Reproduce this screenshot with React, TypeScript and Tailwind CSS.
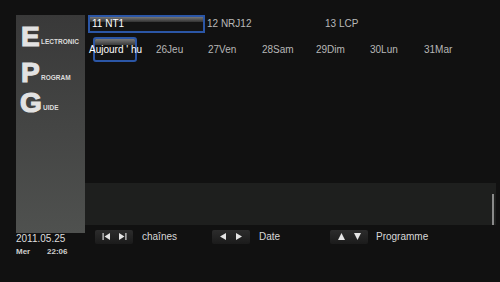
import React from 'react'

const channels = ['11 NT1', '12 NRJ12', '13 LCP']
const days = ['26Jeu', '27Ven', '28Sam', '29Dim', '30Lun', '31Mar']

function Letter({ big, rest, wide }: { big: string; rest: string; wide?: boolean }) {
  return (
    <div className="flex items-end h-[19px] leading-none">
      <span
        className={`text-[28px] font-bold text-[#e2e2e2] [-webkit-text-stroke:1.2px_#e2e2e2] ${
          wide ? 'w-[27px] pl-[4px]' : 'w-[25px] pl-[5px]'
        } leading-[20px] h-[19px] overflow-visible`}
      >
        {big}
      </span>
      <span className="text-[6.5px] font-bold text-[#dcdcdc] leading-none mb-[1px]">{rest}</span>
    </div>
  )
}

function KeyBox({ children }: { children: React.ReactNode }) {
  return (
    <div className="flex items-center justify-center gap-[7px] w-[38px] h-[14px] rounded-[2px] bg-gradient-to-b from-[#2c2c2c] to-[#1b1b1b]">
      {children}
    </div>
  )
}

function Tri({ dir }: { dir: 'l' | 'r' | 'u' | 'd' }) {
  const pts = {
    l: '7,1 7,8 1,4.5',
    r: '1,1 1,8 7,4.5',
    u: '1,8 8,8 4.5,1',
    d: '1,1 8,1 4.5,8',
  }[dir]
  return (
    <svg width="9" height="9" viewBox="0 0 9 9">
      <polygon points={pts} fill="#e4e4e4" />
    </svg>
  )
}

function Skip({ dir }: { dir: 'l' | 'r' }) {
  return (
    <svg width="9" height="9" viewBox="0 0 9 9">
      {dir === 'l' ? (
        <>
          <rect x="0.5" y="1" width="1.2" height="7" fill="#d8d8d8" />
          <polygon points="8,1 8,8 2.5,4.5" fill="#e4e4e4" />
        </>
      ) : (
        <>
          <polygon points="1,1 1,8 6.5,4.5" fill="#e4e4e4" />
          <rect x="7.3" y="1" width="1.2" height="7" fill="#d8d8d8" />
        </>
      )}
    </svg>
  )
}

export default function App() {
  return (
    <div
      className="w-[500px] h-[282px] bg-[#111111] flex overflow-hidden"
      style={{ fontFamily: '"Liberation Sans", Arial, sans-serif' }}
    >
      {/* left column */}
      <div className="w-[85px] pl-4 pt-[15px] flex flex-col shrink-0">
        <div className="w-[69px] h-[218px] bg-gradient-to-b from-[#393939] to-[#4f514f] pt-[12px] flex flex-col gap-[17px]">
          <Letter big="E" rest="LECTRONIC" />
          <Letter big="P" rest="ROGRAM" />
          <div className="mt-[-6px]">
            <Letter big="G" rest="UIDE" wide />
          </div>
        </div>
        <div className="text-[10px] text-[#dedede] leading-none mt-[1px]">2011.05.25</div>
        <div className="flex text-[8px] font-bold text-[#cfcfcf] leading-none mt-[4px]">
          <span className="w-[31px]">Mer</span>
          <span>22:06</span>
        </div>
      </div>

      {/* right column */}
      <div className="flex-1 flex flex-col pt-[15px] pr-1">
        <div className="flex h-[18px] items-center text-[10px] leading-none">
          {channels.map((c, i) => (
            <div
              key={c}
              className={
                i === 0
                  ? 'relative ml-[3px] w-[117px] h-[18px] border-2 border-[#2b56a6] bg-[#141414] text-white flex items-center pl-[2px]'
                  : 'w-[118px] pl-[2px] text-[#b9b9b9]'
              }
            >
              {i === 0 && (
                <div className="absolute left-0 right-0 top-0 h-[5px] bg-gradient-to-b from-[#777] to-[#333]" />
              )}
              <span className="relative">{c}</span>
            </div>
          ))}
        </div>

        <div className="flex items-center h-[26px] mt-[4px] text-[10px] leading-none">
          <div className="relative w-[71px] h-[26px] flex items-center">
            <div className="absolute left-[8px] top-0 w-[44px] h-[25px] rounded-[3px] border-2 border-[#2b56a6] bg-[#141414] overflow-hidden">
              <div className="h-[6px] bg-gradient-to-b from-[#7a7a7a] to-[#3a3a3a]" />
            </div>
            <span className="relative pl-[4px] text-white whitespace-nowrap">Aujourd ' hu</span>
          </div>
          {days.map((d, i) => (
            <div key={d} className={`${i === 0 ? 'w-[52px]' : 'w-[54px]'} text-[#b7b7b7]`}>
              {d}
            </div>
          ))}
        </div>

        <div className="flex-1" />

        <div className="h-[42px] bg-[#1e1f1e] flex justify-end pr-[2px] pt-[11px]">
          <div className="w-[2px] h-[31px] bg-[#8a8a8a]" />
        </div>

        <div className="flex items-center h-[15px] mt-[4px] mb-[38px] text-[10px] leading-none text-[#d8d8d8]">
          <div className="ml-[10px]">
            <KeyBox>
              <Skip dir="l" />
              <Skip dir="r" />
            </KeyBox>
          </div>
          <span className="ml-[9px] w-[70px]">chaînes</span>
          <KeyBox>
            <Tri dir="l" />
            <Tri dir="r" />
          </KeyBox>
          <span className="ml-[9px] w-[71px]">Date</span>
          <KeyBox>
            <Tri dir="u" />
            <Tri dir="d" />
          </KeyBox>
          <span className="ml-[8px]">Programme</span>
        </div>
      </div>
    </div>
  )
}
